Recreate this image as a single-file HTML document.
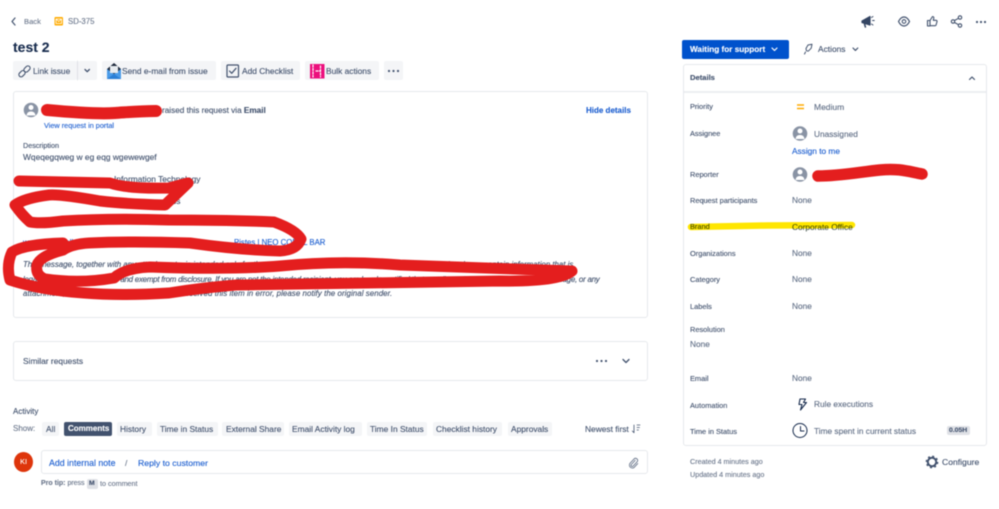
<!DOCTYPE html>
<html><head><meta charset="utf-8"><title>SD-375</title>
<style>
*{box-sizing:border-box}
html,body{margin:0;padding:0;background:#fff}
#p{position:relative;width:999px;height:509px;overflow:hidden;font-family:"Liberation Sans",sans-serif;font-size:8.4px;color:#42526e;filter:blur(.4px)}
.t{position:absolute;white-space:nowrap;line-height:12px;-webkit-text-stroke:.12px currentColor}
.b{position:absolute;background:#f4f5f7;border-radius:2px}
.x{position:absolute;border:1px solid #e6e8ec;border-radius:3px;background:#fff}
.l{color:#1d5fd0}
.g{color:#6b778c}
.lb{font-size:7.4px;color:#42526e}
.v{font-size:8.3px;color:#5e6c84}
svg{position:absolute;left:0;top:0}
</style></head><body><div id="p">

<div class="x" style="left:13px;top:91px;width:635px;height:227px"></div>
<div class="x" style="left:13px;top:341px;width:635px;height:40px"></div>
<div class="x" style="left:41px;top:450px;width:607px;height:24px"></div>
<div class="x" style="left:683px;top:64px;width:304px;height:382px"></div>
<div style="position:absolute;left:684px;top:91px;width:302px;height:2px;background:#eceef1"></div>

<div class="b" style="left:13px;top:61px;width:64px;height:19px"></div>
<div class="b" style="left:78px;top:61px;width:19px;height:19px"></div>
<div class="b" style="left:102px;top:61px;width:114px;height:19px"></div>
<div class="b" style="left:221px;top:61px;width:79px;height:19px"></div>
<div class="b" style="left:305px;top:61px;width:74px;height:19px"></div>
<div class="b" style="left:384px;top:61px;width:19px;height:19px"></div>

<div class="b" style="left:42px;top:422px;width:17px;height:14px"></div>
<div class="b" style="left:64px;top:422px;width:48px;height:14px;background:#42526e"></div>
<div class="b" style="left:117px;top:422px;width:35px;height:14px"></div>
<div class="b" style="left:157px;top:422px;width:61px;height:14px"></div>
<div class="b" style="left:222px;top:422px;width:62px;height:14px"></div>
<div class="b" style="left:289px;top:422px;width:73px;height:14px"></div>
<div class="b" style="left:367px;top:422px;width:60px;height:14px"></div>
<div class="b" style="left:433px;top:422px;width:69px;height:14px"></div>
<div class="b" style="left:508px;top:422px;width:44px;height:14px"></div>
<div class="b" style="left:87px;top:479px;width:11px;height:10px;background:#dfe1e6"></div>
<div class="b" style="left:947px;top:426px;width:23px;height:9px;background:#dfe1e6"></div>
<div style="position:absolute;left:682px;top:40px;width:107px;height:19px;background:#0052cc;border-radius:2px"></div>
<div style="position:absolute;left:14px;top:452px;width:19px;height:20px;background:#de350b;border-radius:50%"></div>

<div class="t g" style="left:24px;top:16px;font-size:7.6px">Back</div>
<div class="t g" style="left:68px;top:16px;font-size:7.8px">SD-375</div>
<div class="t" style="left:13px;top:40px;font-size:14px;line-height:14px;font-weight:bold;color:#172b4d">test 2</div>
<div class="t" style="left:33px;top:65px">Link issue</div>
<div class="t" style="left:122px;top:65px">Send e-mail from issue</div>
<div class="t" style="left:242px;top:65px">Add Checklist</div>
<div class="t" style="left:326px;top:65px">Bulk actions</div>

<div class="t" style="left:162px;top:105px;font-size:8.2px">raised this request via <b>Email</b></div>
<div class="t l" style="left:44px;top:120px;font-size:7.3px">View request in portal</div>
<div class="t l" style="left:586px;top:105px;font-weight:bold;font-size:8px">Hide details</div>
<div class="t" style="left:23px;top:140px;font-size:7.2px">Description</div>
<div class="t" style="left:23px;top:151px;font-size:8.4px">Wqeqegqweg w eg eqg wgewewgef</div>
<div class="t" style="left:114px;top:173px">Information Technology</div>
<div class="t" style="left:172px;top:195px">ss</div>
<div class="t l" style="left:23px;top:237px;font-size:7.8px">www.neocoralbar.com</div>
<div class="t l" style="left:234px;top:237px;font-size:7.8px">Pistes | NEO CORAL BAR</div>
<div class="t" style="left:23px;top:259px;font-size:7.9px;font-style:italic;letter-spacing:-.02px">This message, together with any attachments, is intended only for the use of the individual or entity to which it is addressed and may contain information that is</div>
<div class="t" style="left:23px;top:274px;font-size:7.9px;font-style:italic;letter-spacing:-.227px">legally privileged, confidential and exempt from disclosure. If you are not the intended recipient, you are hereby notified that any dissemination or copying of this message, or any</div>
<div class="t" style="left:23px;top:288px;font-size:7.9px;font-style:italic;letter-spacing:.07px">attachment, is strictly prohibited. If you have received this item in error, please notify the original sender.</div>

<div class="t" style="left:23px;top:355px">Similar requests</div>
<div class="t" style="left:13px;top:406px;font-size:8px">Activity</div>
<div class="t g" style="left:13px;top:423px;font-size:8px">Show:</div>
<div class="t" style="left:46px;top:423px">All</div>
<div class="t" style="left:68px;top:423px;color:#fff;font-weight:bold;font-size:8px">Comments</div>
<div class="t" style="left:120px;top:423px">History</div>
<div class="t" style="left:160px;top:423px">Time in Status</div>
<div class="t" style="left:226px;top:423px">External Share</div>
<div class="t" style="left:292px;top:423px">Email Activity log</div>
<div class="t" style="left:370px;top:423px">Time In Status</div>
<div class="t" style="left:436px;top:423px">Checklist history</div>
<div class="t" style="left:511px;top:423px">Approvals</div>
<div class="t" style="left:585px;top:423px">Newest first</div>
<div class="t" style="left:20px;top:456px;color:#fff;font-size:7.5px">KI</div>
<div class="t l" style="left:49px;top:457px;font-size:8.8px">Add internal note</div>
<div class="t g" style="left:125px;top:457px">/</div>
<div class="t l" style="left:138px;top:457px;font-size:8.7px">Reply to customer</div>
<div class="t g" style="left:41px;top:478px;font-size:7px"><b>Pro tip:</b> press</div>
<div class="t" style="left:89px;top:478px;font-size:6.8px;font-weight:bold">M</div>
<div class="t g" style="left:100px;top:478px;font-size:7.2px">to comment</div>

<div class="t" style="left:690px;top:44px;color:#fff;font-size:8.2px;font-weight:bold">Waiting for support</div>
<div class="t" style="left:818px;top:43px">Actions</div>
<div class="t" style="left:690px;top:72px;font-weight:bold;font-size:7.6px">Details</div>

<div class="t lb" style="left:690px;top:101px">Priority</div>
<div class="t v" style="left:814px;top:101px;font-size:8.5px">Medium</div>
<div class="t lb" style="left:690px;top:128px">Assignee</div>
<div class="t v" style="left:814px;top:128px">Unassigned</div>
<div class="t l" style="left:792px;top:145px;font-size:8.3px">Assign to me</div>
<div class="t lb" style="left:690px;top:169px">Reporter</div>
<div class="t lb" style="left:690px;top:195px">Request participants</div>
<div class="t v" style="left:792px;top:194px">None</div>
<div class="t v" style="left:792px;top:221px;color:#4a5a50">Corporate Office</div>
<div class="t lb" style="left:690px;top:221px">Brand</div>
<div class="t lb" style="left:690px;top:248px">Organizations</div>
<div class="t v" style="left:792px;top:247px">None</div>
<div class="t lb" style="left:690px;top:274px">Category</div>
<div class="t v" style="left:792px;top:273px">None</div>
<div class="t lb" style="left:690px;top:301px">Labels</div>
<div class="t v" style="left:792px;top:300px">None</div>
<div class="t lb" style="left:690px;top:324px">Resolution</div>
<div class="t v" style="left:690px;top:338px">None</div>
<div class="t lb" style="left:690px;top:373px">Email</div>
<div class="t v" style="left:792px;top:372px">None</div>
<div class="t lb" style="left:690px;top:400px">Automation</div>
<div class="t v" style="left:814px;top:398px">Rule executions</div>
<div class="t lb" style="left:690px;top:426px">Time in Status</div>
<div class="t v" style="left:814px;top:425px">Time spent in current status</div>
<div class="t" style="left:949px;top:425px;font-size:6.8px;font-weight:bold">0.05H</div>
<div class="t g" style="left:690px;top:456px;font-size:7.2px">Created 4 minutes ago</div>
<div class="t g" style="left:690px;top:469px;font-size:7.2px">Updated 4 minutes ago</div>
<div class="t" style="left:942px;top:456px;font-size:8.6px">Configure</div>

<svg width="999" height="509" viewBox="0 0 999 509" fill="none" stroke-linecap="round" stroke-linejoin="round">
<!-- breadcrumb -->
<path d="M15 18l-3 3.5 3 3.500" stroke="#42526e" stroke-width="1.200"/>
<rect x="54.500" y="17" width="8.500" height="8.500" rx="1" fill="#ffab00"/>
<path d="M56 19h5.500v4.500H56zM56 19l2.750 2.500L61.500 19" stroke="#fff" stroke-width=".8"/>
<!-- toolbar icons -->
<rect x="18.500" y="71.500" width="7" height="4.400" rx="2.200" stroke="#42526e" stroke-width="1.100" transform="rotate(-45 22 73.700)"/>
<rect x="23.500" y="66.800" width="7" height="4.400" rx="2.200" stroke="#42526e" stroke-width="1.100" transform="rotate(-45 27 69)"/>
<path d="M85 69.500l2.200 2.200 2.200-2.200" stroke="#42526e" stroke-width="1.300"/>
<path d="M77.500 61v19" stroke="#dfe1e6" stroke-width="1"/>
<path d="M107 69h14v10h-14z" fill="#4a9be8" stroke="none"/>
<path d="M107 69l7-6 7 6-7 5z" fill="#1f2a3c" stroke="none"/>
<path d="M110 66h8v7h-8z" fill="#e8ecf0" stroke="none"/>
<path d="M107 79l7-5 7 5z" fill="#2b7fd6" stroke="none"/>
<rect x="227" y="65" width="11.500" height="12" rx="1" stroke="#42526e" stroke-width="1.200"/>
<path d="M229.500 71l2.200 2.300 4.300-5" stroke="#42526e" stroke-width="1.200"/>
<rect x="310" y="64" width="14.500" height="14.500" fill="#ec0f7d" stroke="none"/>
<path d="M313 65v12M320.500 66v11M316 71h4" stroke="#fff" stroke-width="1.200" stroke-dasharray="2 1.500"/>
<g fill="#42526e" stroke="none"><circle cx="389" cy="71" r="1.100"/><circle cx="393.500" cy="71" r="1.100"/><circle cx="398" cy="71" r="1.100"/></g>
<!-- panel avatar -->
<circle cx="31" cy="110" r="7.300" fill="#8993a4" stroke="none"/>
<circle cx="31" cy="107.500" r="2.500" fill="#fff" stroke="none"/>
<path d="M26.500 115.500c.5-3 2-4 4.500-4s4 1 4.500 4z" fill="#fff" stroke="none"/>
<!-- similar -->
<g fill="#42526e" stroke="none"><circle cx="597" cy="361" r="1.100"/><circle cx="601.500" cy="361" r="1.100"/><circle cx="606" cy="361" r="1.100"/></g>
<path d="M623 359.500l3 3 3-3" stroke="#42526e" stroke-width="1.300"/>
<!-- sort -->
<path d="M634 425v7.500M632.300 431l1.700 1.700M637 425h3M637 427.500h2.500M637 430h1.500" stroke="#42526e" stroke-width=".8"/>
<!-- paperclip -->
<path d="M636 459l-5.500 6a1.700 1.700 0 0 0 2.400 2.400l6-6.500a3 3 0 0 0-4.300-4.100l-6 6.500a4.200 4.200 0 0 0 6 5.800l5-5.400" stroke="#6b778c" stroke-width="1.300" transform="translate(190 139) scale(.7)"/>
<!-- top right icons -->
<path d="M862 21l8-4.500v8.500l-8-2.500z" fill="#344563" stroke="#344563" stroke-width="1.200"/>
<path d="M864.500 24l.9 3" stroke="#344563" stroke-width="1.500"/>
<path d="M871.500 17.500l1.500-1M872.500 20.500h1.800M871.500 24l1.500 1" stroke="#344563" stroke-width=".9"/>
<path d="M899 22c1.500-3 3.500-4.500 5.500-4.500s4 1.500 5.500 4.500c-1.500 3-3.500 4.500-5.500 4.500S900.500 25 899 22z" stroke="#42526e" stroke-width="1.200" transform="translate(-.5 -.5)"/>
<circle cx="904" cy="21.500" r="1.800" stroke="#42526e" stroke-width="1.100"/>
<path d="M930 20.500h-2.500v5.500h2.500zM930 20.500l2.500-4c1.200 0 1.500 1 1.200 2l-.4 1.800h2.700c.8 0 1.200.6 1 1.300l-.9 3.300c-.2.500-.5.800-1 .8H930" stroke="#42526e" stroke-width="1.100"/>
<circle cx="953" cy="21.500" r="1.700" stroke="#42526e" stroke-width="1.100"/>
<circle cx="960" cy="17.500" r="1.700" stroke="#42526e" stroke-width="1.100"/>
<circle cx="960" cy="25.500" r="1.700" stroke="#42526e" stroke-width="1.100"/>
<path d="M954.500 20.500l4-2.200M954.500 22.500l4 2.200" stroke="#42526e" stroke-width="1.100"/>
<g fill="#42526e" stroke="none"><circle cx="977" cy="22" r="1.100"/><circle cx="981" cy="22" r="1.100"/><circle cx="985" cy="22" r="1.100"/></g>
<!-- status -->
<path d="M772 48l2.500 2.500L777 48" stroke="#fff" stroke-width="1.200"/>
<path d="M808 45l4-.8-.8 4-3 3-1.800-.5-.4-2.200zM805.500 52l-1 2" stroke="#42526e" stroke-width="1"/>
<path d="M853 48l2.400 2.400 2.400-2.400" stroke="#42526e" stroke-width="1.200"/>
<path d="M969.500 79.500l2.500-2.500 2.500 2.500" stroke="#42526e" stroke-width="1.200"/>
<!-- priority -->
<path d="M797 105h7M797 108.500h7" stroke="#ffab00" stroke-width="1.500" stroke-linecap="butt"/>
<!-- assignee -->
<circle cx="800" cy="133.500" r="7.300" fill="#8993a4" stroke="none"/>
<circle cx="800" cy="131" r="2.500" fill="#fff" stroke="none"/>
<path d="M795.500 139c.5-3 2-4 4.500-4s4 1 4.500 4z" fill="#fff" stroke="none"/>
<circle cx="800" cy="174.500" r="7.300" fill="#8993a4" stroke="none"/>
<circle cx="800" cy="172" r="2.500" fill="#fff" stroke="none"/>
<path d="M795.500 180c.5-3 2-4 4.500-4s4 1 4.500 4z" fill="#fff" stroke="none"/>
<!-- automation -->
<path d="M800 399h5.500l-2 3.500h3l-6 7.500 1.500-5.500h-3z" stroke="#172b4d" stroke-width="1.100"/>
<!-- clock -->
<circle cx="800" cy="430.500" r="7" stroke="#172b4d" stroke-width="1"/>
<path d="M800.500 426.500v4.500h3.500" stroke="#172b4d" stroke-width="1"/>
<!-- gear -->
<circle cx="932" cy="462" r="4.200" stroke="#42526e" stroke-width="2"/>
<circle cx="932" cy="462" r="5.600" stroke="#42526e" stroke-width="1.500" stroke-dasharray="2 2.400" stroke-linecap="butt"/>
<!-- highlight -->
<path d="M691 227l76-1.500 85-.5" stroke="#ffe600" stroke-width="6.500" style="mix-blend-mode:multiply"/>
<!-- scribbles -->
<path d="M47 110C80 113 100 114 115 113S140 111 156 111" stroke="#e41e1e" stroke-width="12"/>
<path d="M818 176C840 176 860 172 880 170C900 168 910 172 922 174" stroke="#e41e1e" stroke-width="11.500"/>
<path d="M19 181L110 183Q127 189 169 188L188 183L165 205Q127 204 100 201Q60 194 49 195Q25 198 15 205Q22 215 30 222Q40 224 63 221Q110 218 169 220Q230 220 274 222Q296 230 301 239Q297 250 280 251Q240 250 190 243Q130 241 89 243Q72 244 63 250Q40 256 37 265Q35 275 45 279Q80 284 114 278Q125 268 150 267Q230 270 280 266Q340 260 400 265L572 271Q560 282 500 281L236 285Q200 288 169 293Q120 296 84 293Q40 290 10 280Q6 265 12 252Q25 244 63 243" stroke="#e41e1e" stroke-width="11"/>
</svg>
</div></body></html>
